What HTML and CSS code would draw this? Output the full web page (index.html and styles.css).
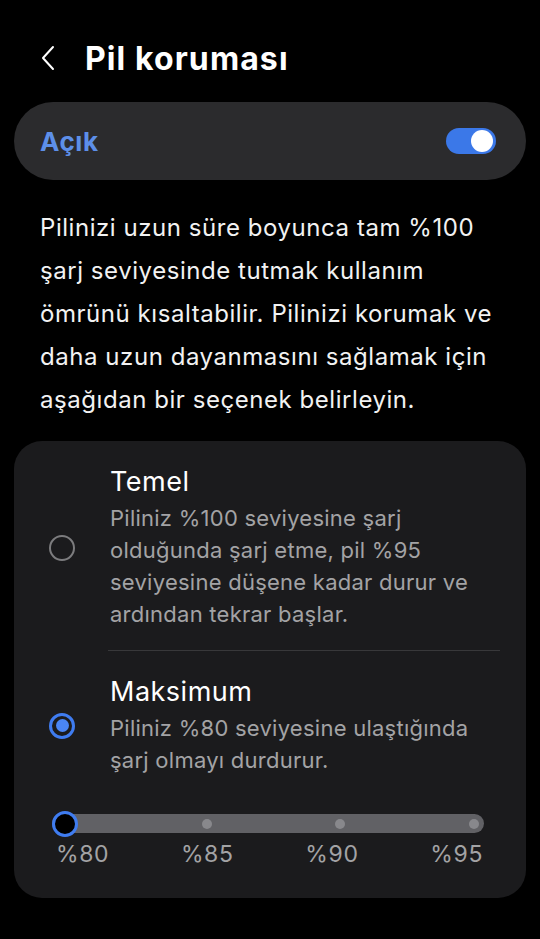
FILE: index.html
```html
<!DOCTYPE html>
<html lang="tr">
<head>
  <meta charset="UTF-8" />
  <meta name="viewport" content="width=device-width, initial-scale=1.0"/>
  <title>Pil koruması</title>
  <link rel="stylesheet" href="styles.css">
</head>
<body>

<!-- Header -->
<div class="header">
  <svg class="back" width="16" height="26" viewBox="0 0 16 26">
    <path d="M13 2 L3 13 L13 24" fill="none" stroke="#fff" stroke-width="2" stroke-linecap="round" stroke-linejoin="round"/>
  </svg>
  <h1>Pil koruması</h1>
</div>

<!-- Master switch -->
<div class="switch-card">
  <span class="switch-label">Açık</span>
  <div class="switch"><div class="knob"></div></div>
</div>

<p class="intro">Pilinizi uzun süre boyunca tam %100 şarj seviyesinde tutmak kullanım ömrünü kısaltabilir. Pilinizi korumak ve daha uzun dayanmasını sağlamak için aşağıdan bir seçenek belirleyin.</p>

<!-- Options -->
<div class="options">
  <div class="option">
    <div class="radio-cell"><span class="radio"></span></div>
    <div class="option-text">
      <div class="option-title">Temel</div>
      <div class="option-desc">Piliniz %100 seviyesine şarj olduğunda şarj etme, pil %95 seviyesine düşene kadar durur ve ardından tekrar başlar.</div>
    </div>
  </div>

  <div class="divider"></div>

  <div class="option">
    <div class="radio-cell"><span class="radio checked"></span></div>
    <div class="option-text">
      <div class="option-title">Maksimum</div>
      <div class="option-desc">Piliniz %80 seviyesine ulaştığında şarj olmayı durdurur.</div>
    </div>
  </div>

  <div class="slider">
    <div class="track">
      <span class="thumb"></span>
      <span class="dot"></span>
      <span class="dot"></span>
      <span class="dot"></span>
    </div>
    <div class="ticks">
      <span>%80</span>
      <span>%85</span>
      <span>%90</span>
      <span>%95</span>
    </div>
  </div>
</div>

</body>
</html>
```

FILE: styles.css
```css
body {
  margin: 0;
  background: #000;
  color: #fff;
  font-family: Inter, Roboto, sans-serif;
  width: 540px;
  min-height: 939px;
}
.header {
  display: flex;
  align-items: center;
  padding: 20px 0 6px 40px;
  box-sizing: border-box;
  height: 102px;
}
.back {
  margin-right: 29px;
}
h1 {
  margin: 0;
  font-size: 32px;
  font-weight: 700;
  letter-spacing: 1.1px;
}
.switch-card {
  margin: 0 14px;
  height: 78px;
  border-radius: 39px;
  background: #2b2b2d;
  display: flex;
  align-items: center;
  justify-content: space-between;
  padding: 0 30px 0 26px;
}
.switch-label {
  color: #5d8fe8;
  font-size: 26px;
  font-weight: 700;
  letter-spacing: 0.6px;
}
.switch {
  width: 50px;
  height: 26px;
  border-radius: 13px;
  background: #3b78e8;
  display: flex;
  align-items: center;
  justify-content: flex-end;
  padding: 0 3px;
  box-sizing: border-box;
}
.knob {
  width: 22px;
  height: 22px;
  border-radius: 50%;
  background: #fff;
}
.intro {
  margin: 26px 40px 20px 40px;
  font-size: 24px;
  line-height: 43px;
  letter-spacing: 0.55px;
  color: #f2f2f2;
}
.options {
  margin: 0 14px;
  background: #1b1b1d;
  border-radius: 28px;
  padding: 24px 26px 31px 0;
}
.option {
  display: flex;
  align-items: center;
}
.radio-cell {
  width: 96px;
  flex-shrink: 0;
  display: flex;
  padding-left: 35px;
  box-sizing: border-box;
}
.radio {
  width: 26px;
  height: 26px;
  border-radius: 50%;
  border: 2px solid #7c7c7e;
  box-sizing: border-box;
}
.radio.checked {
  border: 3px solid #3f7cf0;
  display: flex;
  align-items: center;
  justify-content: center;
}
.radio.checked::after {
  content: "";
  width: 13px;
  height: 13px;
  border-radius: 50%;
  background: #4a86f5;
}
.option-text {
  flex: 1;
}
.option-title {
  font-size: 27px;
  line-height: 34px;
  letter-spacing: 0.5px;
  color: #fff;
}
.option-desc {
  margin-top: 3px;
  font-size: 22px;
  line-height: 32px;
  letter-spacing: 0.25px;
  color: #a3a3a5;
}
.divider {
  height: 1px;
  background: #38383a;
  margin: 20px 0 24px 94px;
}
.slider {
  padding: 0 16px 0 38px;
  margin-top: 38px;
}
.track {
  height: 19px;
  border-radius: 10px;
  background: #616165;
  display: flex;
  align-items: center;
  justify-content: space-between;
  padding-right: 5px;
}
.thumb {
  width: 26px;
  height: 26px;
  border-radius: 50%;
  background: #000;
  border: 3px solid #3f7cf0;
  box-sizing: border-box;
}
.dot {
  width: 10px;
  height: 10px;
  border-radius: 50%;
  background: #88888c;
}
.ticks {
  display: flex;
  justify-content: space-between;
  margin: 8px 1px 0 4px;
  font-size: 23px;
  line-height: 26px;
  letter-spacing: 0.6px;
  color: #a3a3a5;
}
```
